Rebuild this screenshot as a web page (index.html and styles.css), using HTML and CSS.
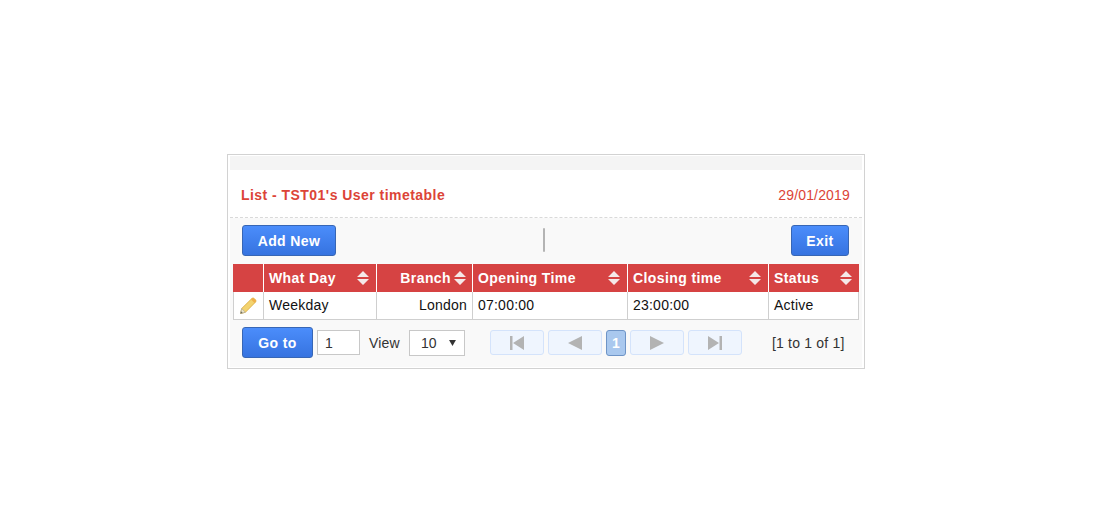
FILE: index.html
```html
<!DOCTYPE html>
<html lang="en">
<head>
<meta charset="utf-8">
<title>User timetable</title>
<link rel="stylesheet" href="styles.css">
</head>
<body>
<main class="panel">
  <div class="topband"></div>
  <header class="titlebar">
    <h1 class="title">List - TST01's User timetable</h1>
    <span class="date">29/01/2019</span>
  </header>
  <section class="body">
    <div class="toolbar">
      <button class="btn btn-add">Add New</button>
      <span class="divider"></span>
      <button class="btn btn-exit">Exit</button>
    </div>
    <table class="grid">
      <thead>
        <tr>
          <th class="c-edit"></th>
          <th class="c-day"><span class="th"><span>What Day</span><svg class="sort" viewBox="0 0 14 16"><path d="M7 1l6 6H1zM7 15L1 9h12z"/></svg></span></th>
          <th class="c-branch"><span class="th th-right"><span>Branch</span><svg class="sort" viewBox="0 0 14 16"><path d="M7 1l6 6H1zM7 15L1 9h12z"/></svg></span></th>
          <th class="c-open"><span class="th"><span>Opening Time</span><svg class="sort" viewBox="0 0 14 16"><path d="M7 1l6 6H1zM7 15L1 9h12z"/></svg></span></th>
          <th class="c-close"><span class="th"><span>Closing time</span><svg class="sort" viewBox="0 0 14 16"><path d="M7 1l6 6H1zM7 15L1 9h12z"/></svg></span></th>
          <th class="c-status"><span class="th"><span>Status</span><svg class="sort" viewBox="0 0 14 16"><path d="M7 1l6 6H1zM7 15L1 9h12z"/></svg></span></th>
        </tr>
      </thead>
      <tbody>
        <tr>
          <td class="edit-cell">
            <svg class="pencil" viewBox="0 0 18 18">
              <path d="M1.500 16.500l1.200-5L12.800 1.600c.8-.7 1.700-.7 2.400 0l1.200 1.200c.7.7.7 1.600 0 2.400L6.400 15.300z" fill="#f3d36f" stroke="#d9a93a" stroke-width=".8"/>
              <path d="M12 2.400l3.600 3.600 .9-.9c.7-.7.7-1.600 0-2.300l-1.300-1.300c-.7-.7-1.600-.7-2.300 0z" fill="#eeb04a"/>
              <path d="M1.500 16.500l1.200-5 3.700 3.800z" fill="#e9e2c8" stroke="#a9a48c" stroke-width=".6"/>
              <path d="M1.500 16.500l.5-2.200 1.700 1.700z" fill="#6b6b62"/>
            </svg>
          </td>
          <td>Weekday</td>
          <td class="right">London</td>
          <td>07:00:00</td>
          <td>23:00:00</td>
          <td>Active</td>
        </tr>
      </tbody>
    </table>
    <div class="pager">
      <button class="btn btn-go">Go to</button>
      <input class="page-input" type="text" value="1">
      <span class="view-label">View</span>
      <span class="view-select">10<svg class="caret" viewBox="0 0 8 7"><path d="M0 0h8L4 7z"/></svg></span>
      <div class="nav">
        <button class="nav-btn"><svg viewBox="0 0 16 14"><path d="M1 0h2.500v14H1zM15 0v14L4 7z"/></svg></button>
        <button class="nav-btn nav-prev"><svg viewBox="0 0 16 14"><path d="M15 0v14L1 7z"/></svg></button>
        <span class="page-current">1</span>
        <button class="nav-btn nav-next"><svg viewBox="0 0 16 14"><path d="M1 0v14l14-7z"/></svg></button>
        <button class="nav-btn"><svg viewBox="0 0 16 14"><path d="M15 0h-2.500v14H15zM1 0v14l11-7z"/></svg></button>
      </div>
      <span class="count">[1 to 1 of 1]</span>
    </div>
  </section>
</main>
</body>
</html>
```
FILE: styles.css
```css
* { box-sizing: border-box; }
html, body { margin: 0; padding: 0; background: #fff; }
body { font-family: "Liberation Sans", Arial, sans-serif; font-size: 14px; color: #111; }

.panel {
  width: 638px;
  height: 215px;
  margin: 154px 0 0 227px;
  border: 1px solid #d2d2d2;
  padding: 1px 2px 0 2px;
  display: flex;
  flex-direction: column;
}
.topband { height: 14px; background: #f4f4f4; flex: none; }
.titlebar {
  height: 48px;
  flex: none;
  display: flex;
  align-items: center;
  justify-content: space-between;
  padding: 3px 12px 0 11px;
  border-bottom: 1px dashed #d9d9d9;
  color: #dc4437;
}
.title { margin: 0; font-size: 14px; font-weight: bold; letter-spacing: .46px; }
.date { font-size: 14px; letter-spacing: .17px; }

.body { flex: 1; background: #f9f9f9; padding: 7px 0 0 3px; margin-bottom: 1px; }
.toolbar { display: flex; align-items: flex-start; justify-content: space-between; height: 32px; padding: 0 13px 0 9px; }
.btn {
  font: bold 14px "Liberation Sans", Arial, sans-serif;
  letter-spacing: .4px;
  color: #fff;
  border: 1px solid #3766b5;
  border-radius: 3px;
  background: linear-gradient(#4b8dfb, #3673e0);
  height: 31px;
  padding: 0;
}
.toolbar .btn { padding-top: 1px; }
.btn-add { width: 94px; }
.btn-exit { width: 58px; }
.btn-go { width: 71px; }
.divider { width: 2px; height: 24px; margin: 3px 39px 0 0; background: #b4b4b4; border-radius: 1px; }

.grid {
  table-layout: fixed;
  border-collapse: separate;
  border-spacing: 0;
  width: 626px;
  margin-top: 7px;
}
.grid th {
  height: 28px;
  background: #d64343;
  color: #fff;
  font-size: 14px;
  font-weight: bold;
  letter-spacing: .4px;
  padding: 0 5px;
  border-right: 1px solid #fff;
  text-align: left;
}
.grid th:last-child { border-right: 0; }
.grid td {
  height: 28px;
  background: #fff;
  padding: 0 5px 2px;
  border-right: 1px solid #cfcfcf;
  border-bottom: 1px solid #cfcfcf;
  white-space: nowrap;
  color: #111;
  letter-spacing: .22px;
}
.grid td:first-child { border-left: 1px solid #cfcfcf; }
.c-edit { width: 31px; }
.c-day { width: 113px; }
.c-branch { width: 96px; }
.c-open { width: 155px; }
.c-close { width: 141px; }
.c-status { width: 90px; }
.th { display: flex; align-items: center; justify-content: space-between; padding-right: 1px; }
.th-right { justify-content: flex-end; gap: 2px; padding-right: 0; }
.sort { width: 14px; height: 16px; fill: #f5e8e8; flex: none; }
.right { text-align: right; }
.edit-cell { padding: 0 !important; text-align: center; }
.pencil { width: 18px; height: 18px; display: block; margin: 1px 0 0 5px; }

.pager { display: flex; align-items: center; height: 31px; margin-top: 7px; padding-left: 9px; color: #333; }
.page-input {
  width: 43px;
  height: 25px;
  margin-left: 4px;
  border: 1px solid #c8c8c8;
  background: #fff;
  font: 14px "Liberation Sans", Arial, sans-serif;
  color: #333;
  padding: 0 0 0 7px;
}
.view-label { margin-left: 9px; letter-spacing: .2px; }
.view-select {
  width: 56px;
  height: 26px;
  margin-left: 9px;
  border: 1px solid #c8c8c8;
  background: #fff;
  display: flex;
  align-items: center;
  justify-content: space-between;
  padding: 0 8px 0 11px;
}
.caret { width: 7px; height: 6px; fill: #333; }
.nav { display: flex; align-items: center; margin-left: 25px; }
.nav-btn {
  width: 54px;
  height: 25px;
  padding: 0;
  border: 1px solid #d4e3fb;
  border-radius: 3px;
  background: #eff5fe;
  display: flex;
  align-items: center;
  justify-content: center;
}
.nav-btn svg { width: 16px; height: 14px; fill: #b3b3b3; }
.nav-prev { margin-left: 4px; }
.nav-next { margin: 0 4px 0 0; }
.page-current {
  width: 20px;
  height: 26px;
  margin: 0 4px;
  border: 1px solid #6e94c6;
  border-radius: 3px;
  background: #a9c8ee;
  color: #fff;
  font-weight: bold;
  display: flex;
  align-items: center;
  justify-content: center;
}
.count { margin-left: 30px; letter-spacing: .2px; }
```
